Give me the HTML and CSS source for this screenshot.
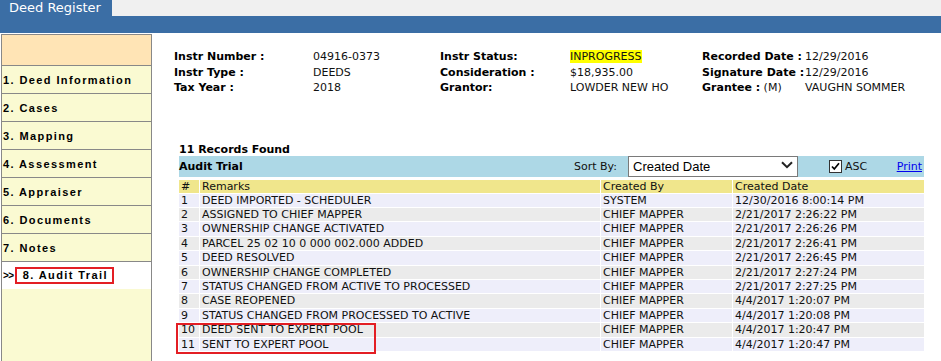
FILE: index.html
```html
<!DOCTYPE html>
<html>
<head>
<meta charset="utf-8">
<title>Deed Register</title>
<link rel="stylesheet" href="styles.css">
</head>
<body>
<div class="topbar"><div class="tab">Deed Register</div></div>
<div class="band"></div>
<div class="page">
  <nav class="side">
    <div class="side-head"></div>
    <div class="item">1. Deed Information</div>
    <div class="item">2. Cases</div>
    <div class="item">3. Mapping</div>
    <div class="item">4. Assessment</div>
    <div class="item">5. Appraiser</div>
    <div class="item">6. Documents</div>
    <div class="item">7. Notes</div>
    <div class="item current"><span class="arrows">&gt;&gt;</span><span class="mark">8. Audit Trail</span></div>
  </nav>
  <main class="main">
    <div class="info">
      <b>Instr Number :</b><span>04916-0373</span><b>Instr Status:</b><span><span class="hl">INPROGRESS</span></span><b>Recorded Date :</b><span>12/29/2016</span>
      <b>Instr Type :</b><span>DEEDS</span><b>Consideration :</b><span>$18,935.00</span><b>Signature Date :</b><span>12/29/2016</span>
      <b>Tax Year :</b><span>2018</span><b>Grantor:</b><span>LOWDER NEW HO</span><span><b>Grantee :</b> (M)</span><span>VAUGHN SOMMER</span>
    </div>
    <section class="records">
      <div class="found">11 Records Found</div>
      <div class="bar">
        <div class="bar-title">Audit Trial</div>
        <div class="sort-label">Sort By:</div>
        <div class="select">
          <span>Created Date</span>
          <svg class="chev" width="12" height="8" viewBox="0 0 12 8"><path d="M1 1.2 L6 6.2 L11 1.2" fill="none" stroke="#222" stroke-width="2"/></svg>
        </div>
        <svg class="check" width="13" height="13" viewBox="0 0 13 13"><rect x="0.5" y="0.5" width="12" height="12" fill="#fff" stroke="#333"/><path d="M3 6.5 L5.3 9 L10 3.3" fill="none" stroke="#000" stroke-width="1.7"/></svg>
        <span class="asc">ASC</span>
        <a class="print" href="#">Print</a>
      </div>
      <div class="tablewrap">
        <table class="grid">
          <colgroup><col class="c1"><col class="c2"><col class="c3"><col class="c4"></colgroup>
          <thead>
            <tr><th>#</th><th>Remarks</th><th>Created By</th><th>Created Date</th></tr>
          </thead>
          <tbody>
            <tr><td>1</td><td>DEED IMPORTED - SCHEDULER</td><td>SYSTEM</td><td>12/30/2016 8:00:14 PM</td></tr>
            <tr><td>2</td><td>ASSIGNED TO CHIEF MAPPER</td><td>CHIEF MAPPER</td><td>2/21/2017 2:26:22 PM</td></tr>
            <tr><td>3</td><td>OWNERSHIP CHANGE ACTIVATED</td><td>CHIEF MAPPER</td><td>2/21/2017 2:26:26 PM</td></tr>
            <tr><td>4</td><td>PARCEL 25 02 10 0 000 002.000 ADDED</td><td>CHIEF MAPPER</td><td>2/21/2017 2:26:41 PM</td></tr>
            <tr><td>5</td><td>DEED RESOLVED</td><td>CHIEF MAPPER</td><td>2/21/2017 2:26:45 PM</td></tr>
            <tr><td>6</td><td>OWNERSHIP CHANGE COMPLETED</td><td>CHIEF MAPPER</td><td>2/21/2017 2:27:24 PM</td></tr>
            <tr><td>7</td><td>STATUS CHANGED FROM ACTIVE TO PROCESSED</td><td>CHIEF MAPPER</td><td>2/21/2017 2:27:25 PM</td></tr>
            <tr><td>8</td><td>CASE REOPENED</td><td>CHIEF MAPPER</td><td>4/4/2017 1:20:07 PM</td></tr>
            <tr><td>9</td><td>STATUS CHANGED FROM PROCESSED TO ACTIVE</td><td>CHIEF MAPPER</td><td>4/4/2017 1:20:08 PM</td></tr>
            <tr><td>10</td><td>DEED SENT TO EXPERT POOL</td><td>CHIEF MAPPER</td><td>4/4/2017 1:20:47 PM</td></tr>
            <tr><td>11</td><td>SENT TO EXPERT POOL</td><td>CHIEF MAPPER</td><td>4/4/2017 1:20:47 PM</td></tr>
          </tbody>
        </table>
        <div class="redbox"></div>
      </div>
    </section>
  </main>
</div>
</body>
</html>
```

FILE: styles.css
```css
html, body {
  margin: 0;
  padding: 0;
  height: 100%;
  background: #fff;
  font-family: "DejaVu Sans", Verdana, sans-serif;
  font-size: 11px;
  color: #111;
  overflow: hidden;
}

.topbar {
  height: 16px;
  background: #f0f0f0;
  display: flex;
}

.tab {
  width: 112px;
  height: 16px;
  background: #3b6ea5;
  color: #fff;
  font-size: 13px;
  line-height: 15px;
  padding-left: 9px;
  box-sizing: border-box;
  white-space: nowrap;
}

.band {
  height: 17px;
  background: #3b6ea5;
}

.page {
  display: flex;
  align-items: stretch;
  height: calc(100% - 34px);
  margin-top: 1px;
}

.side {
  width: 151px;
  margin-left: 1px;
  box-sizing: border-box;
  border: 1px solid #888;
  border-bottom: none;
  background: #fafad2;
  font-family: "Liberation Sans", Arial, sans-serif;
  font-weight: bold;
  font-size: 11px;
  letter-spacing: 1.4px;
  color: #000;
  flex-shrink: 0;
}

.side-head {
  height: 30px;
  background: #ffe4b5;
  border-bottom: 1px solid #888;
}

.item {
  height: 27px;
  border-bottom: 1px solid #888;
  display: flex;
  align-items: center;
  padding-left: 1px;
  white-space: nowrap;
}

.item.current {
  background: #fff;
  border-bottom: none;
}

.arrows {
  font-weight: bold;
  font-size: 10px;
  letter-spacing: -0.5px;
  margin-right: 1px;
}

.mark {
  border: 2px solid #e31e24;
  padding: 0 4px 0 6px;
  line-height: 13px;
}

.main {
  flex: 1;
  display: flex;
  flex-direction: column;
}

.info {
  margin: 15px 0 0 22px;
  display: grid;
  grid-template-columns: 139px 127px 130px 132px 103px auto;
  line-height: 15.5px;
  white-space: nowrap;
}

.info b {
  color: #000;
}

.hl {
  background: #ffff00;
}

.records {
  margin: 48px 0 0 27px;
  width: 745px;
}

.found {
  font-weight: bold;
  color: #000;
  line-height: 12px;
}

.bar {
  height: 21px;
  background: #add8e6;
  display: flex;
  align-items: center;
  white-space: nowrap;
}

.bar-title {
  width: 395px;
  font-weight: bold;
  color: #000;
}

.sort-label {
  width: 54px;
}

.select {
  width: 170px;
  height: 21px;
  box-sizing: border-box;
  border: 1px solid #7a7a7a;
  background: #fff;
  display: flex;
  align-items: center;
  justify-content: space-between;
  padding: 0 4px 0 4px;
  font-family: "Liberation Sans", Arial, sans-serif;
  font-size: 13px;
  color: #000;
}

.chev {
  display: block;
  margin-top: -2px;
}

.check {
  display: block;
  margin-left: 31px;
  margin-top: 1px;
}

.asc {
  margin-left: 3px;
}

.print {
  margin-left: auto;
  margin-right: 2px;
  color: #0000ee;
  text-decoration: underline;
}

.tablewrap {
  position: relative;
  margin-top: 3px;
}

.grid {
  width: 100%;
  table-layout: fixed;
  border-collapse: separate;
  border-spacing: 0;
}

.c1 { width: 21px; }
.c2 { width: 401px; }
.c3 { width: 132px; }

.grid th,
.grid td {
  text-align: left;
  font-weight: normal;
  padding: 0 0 0 2px;
  height: 13.4px;
  line-height: 13.4px;
  border-right: 1px solid #fff;
  border-bottom: 1px solid #fff;
  white-space: nowrap;
  overflow: hidden;
}

.grid th:last-child,
.grid td:last-child {
  border-right: none;
}

.grid thead th {
  background: #f0e68c;
  height: 13px;
  line-height: 13px;
}

.grid tbody tr:nth-child(odd) td {
  background: #eeeefa;
}

.grid tbody tr:nth-child(even) td {
  background: #ebebeb;
}

.redbox {
  position: absolute;
  left: -3px;
  top: 143px;
  width: 200px;
  height: 31px;
  box-sizing: border-box;
  border: 2px solid #e31e24;
}
```
